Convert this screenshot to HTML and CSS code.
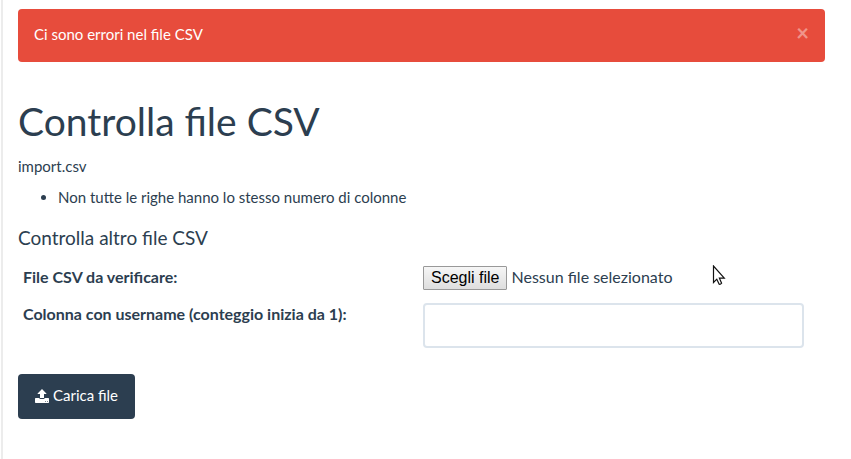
FILE: index.html
```html
<!DOCTYPE html>
<html lang="it">
<head>
<meta charset="utf-8">
<meta name="viewport" content="width=device-width, initial-scale=1">
<title>Controlla file CSV</title>
<link rel="stylesheet" href="styles.css">
</head>
<body>
<main class="content">
  <div class="alert" role="alert">
    <span>Ci sono errori nel file CSV</span>
    <button class="alert-close" type="button">×</button>
  </div>
  <h1 class="title">Controlla file CSV</h1>
  <p class="filename">import.csv</p>
  <ul class="errors">
    <li>Non tutte le righe hanno lo stesso numero di colonne</li>
  </ul>
  <h4 class="subtitle">Controlla altro file CSV</h4>
  <form>
    <div class="fields">
      <label class="field-label" for="csv">File CSV da verificare:</label>
      <div class="file-picker">
        <span class="file-button">Scegli file</span>
        <span class="file-status">Nessun file selezionato</span>
        <input class="file-input" id="csv" type="file" accept=".csv">
      </div>
      <label class="field-label" for="column">Colonna con username (conteggio inizia da 1):</label>
      <input class="text-input" id="column" type="text">
    </div>
    <button class="submit" type="submit">
      <svg class="submit-icon" viewBox="0 0 14 14" aria-hidden="true">
        <path fill="currentColor" d="M7 0 11.4 4.4Q11.600 5 11 5H9V9H5V5H3Q2.400 5 2.600 4.400Z"/>
        <path fill="currentColor" fill-rule="evenodd" d="M.7 9H4.200Q4.500 10 5.500 10H8.500Q9.500 10 9.800 9H13.300Q14 9 14 9.700V13.300Q14 14 13.300 14H.7Q0 14 0 13.300V9.700Q0 9 .7 9ZM10 12V12.800H10.800V12ZM12 12V12.800H12.800V12Z"/>
      </svg>
      <span>Carica file</span>
    </button>
  </form>
</main>
<svg class="pointer" viewBox="0 0 14 21" aria-hidden="true">
  <path d="M1.500 1V17.500L4.800 14.200L7.200 19.200Q8.500 19.600 9.600 18.200L7.400 13.200H12.300Z" fill="#fff" stroke="#111" stroke-width="1.200"/>
</svg>
</body>
</html>
```
FILE: styles.css
```css
* {
  box-sizing: border-box;
}

body {
  margin: 0;
  background: #fff;
  color: #2c3e50;
  font: 15px/21px Lato, sans-serif;
}

.content {
  min-height: 100vh;
  margin-left: 1px;
  padding: 9px 26px 40px 15px;
  border-left: 2px solid #ececec;
}

.alert {
  display: flex;
  align-items: flex-start;
  justify-content: space-between;
  padding: 15px 16px 17px;
  border-radius: 4px;
  background: #e74c3c;
  color: #fff;
}

.alert-close {
  padding: 0;
  border: 0;
  background: none;
  color: #fff;
  font: bold 22px/18px Lato, sans-serif;
  opacity: 0.4;
}

.title {
  margin: 38px 0 13px;
  font-size: 39px;
  font-weight: 400;
  line-height: 43px;
}

.filename {
  margin: 0 0 10px;
}

.errors {
  margin: 0 0 19px;
  padding-left: 40px;
}

.subtitle {
  margin: 0 0 18px;
  font-size: 19px;
  font-weight: 400;
  line-height: 21px;
}

.fields {
  display: grid;
  grid-template-columns: 1fr 1fr;
  gap: 13px 19px;
  align-items: start;
  padding: 0 21px 0 5px;
}

.field-label {
  font-size: 16px;
  font-weight: 700;
}

.file-picker {
  display: flex;
  align-items: flex-start;
  gap: 4px;
  height: 24px;
  position: relative;
}

.file-button {
  padding: 0 7px;
  border: 1px solid #999;
  border-radius: 1px;
  background: linear-gradient(#f6f6f6, #dedede);
  color: #000;
  font: 16px/22px "Liberation Sans", sans-serif;
}

.file-status {
  font-size: 16px;
  line-height: 22px;
}

.file-input {
  position: absolute;
  inset: 0;
  width: 100%;
  opacity: 0;
}

.text-input {
  width: 100%;
  height: 45px;
  padding: 10px 15px;
  border: 2px solid #dce4ec;
  border-radius: 4px;
  color: inherit;
  font: inherit;
}

.submit {
  display: inline-flex;
  align-items: center;
  gap: 4px;
  margin-top: 26px;
  padding: 11px 17px 13px;
  border: 0;
  border-radius: 4px;
  background: #2c3e50;
  color: #fff;
  font: 15px/21px Lato, sans-serif;
}

.submit-icon {
  width: 14px;
  height: 14px;
}

.pointer {
  position: absolute;
  left: 712px;
  top: 265px;
  width: 14px;
  height: 21px;
}
```
